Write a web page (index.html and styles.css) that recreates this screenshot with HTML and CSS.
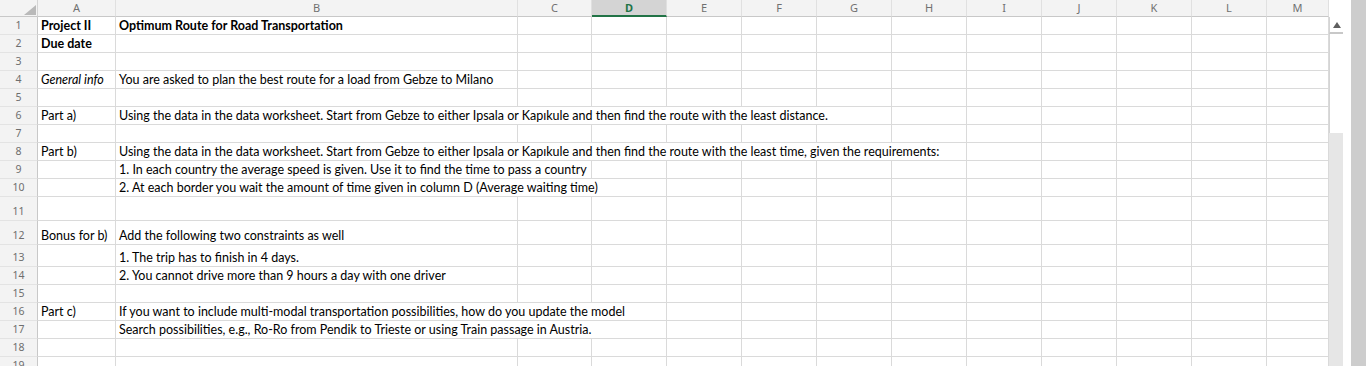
FILE: index.html
```html
<!DOCTYPE html>
<html lang="en">
<head>
  <meta charset="UTF-8">
  <meta name="viewport" content="width=device-width, initial-scale=1.0">
  <title>Project II - Optimum Route for Road Transportation</title>
  <link rel="stylesheet" href="styles.css">
</head>
<body>
  <div class="workbook">
    <div class="sheet" id="sheet">
      <div class="row head-row">
        <div class="corner"></div>
        <div class="col-head">A</div>
        <div class="col-head">B</div>
        <div class="col-head">C</div>
        <div class="col-head selected">D</div>
        <div class="col-head">E</div>
        <div class="col-head">F</div>
        <div class="col-head">G</div>
        <div class="col-head">H</div>
        <div class="col-head">I</div>
        <div class="col-head">J</div>
        <div class="col-head">K</div>
        <div class="col-head">L</div>
        <div class="col-head">M</div>
      </div>
    </div>

    <div class="vscroll">
      <div class="vscroll-top"></div>
      <div class="vscroll-up"></div>
      <div class="vscroll-thumb"></div>
      <div class="vscroll-track"></div>
    </div>
    <div class="spacer"></div>
    <div class="page-scroll"></div>
  </div>

  <script src="script.js"></script>
</body>
</html>
```

FILE: styles.css
```css
html, body {
  height: 100%;
  margin: 0;
  padding: 0;
  overflow: hidden;
  background: #fff;
}

.workbook {
  display: flex;
  height: 100%;
}

.sheet {
  width: 1329px;
  flex: none;
  font-family: 'Lato', sans-serif;
  font-size: 12.5px;
  color: #000;
}

.row {
  display: grid;
  grid-template-columns: 38px 78px 402px 74px repeat(9, 75px) 62px;
  height: 18px;
}

.row-tall {
  height: 24px;
}

.row-mid {
  height: 22px;
}

.head-row {
  height: 17px;
  background: #f3f3f3;
}

.corner {
  position: relative;
  border-right: 1px solid #d4d4d4;
  border-bottom: 1px solid #c8c8c8;
}

.corner::after {
  content: '';
  position: absolute;
  right: 1px;
  bottom: 1px;
  border-style: solid;
  border-width: 0 0 10px 12px;
  border-color: transparent transparent #b9b9b9 transparent;
}

.col-head {
  box-sizing: border-box;
  text-align: center;
  color: #707070;
  font-family: 'Noto Sans', sans-serif;
  font-size: 11px;
  line-height: 16px;
  border-right: 1px solid #e0e0e0;
  border-bottom: 1px solid #c8c8c8;
}

.col-head.selected {
  background: #d4d4d4;
  color: #217346;
  font-weight: bold;
  border-bottom: 2px solid #217346;
  line-height: 15px;
}

.row-head {
  box-sizing: border-box;
  display: flex;
  align-items: flex-end;
  justify-content: center;
  padding-bottom: 2px;
  background: #f3f3f3;
  color: #6e6e6e;
  font-family: 'Noto Sans', sans-serif;
  font-size: 10.5px;
  border-right: 1px solid #c8c8c8;
  border-bottom: 1px solid #e3e3e3;
}

.cell {
  box-sizing: border-box;
  display: flex;
  align-items: flex-end;
  padding: 0 3px 1px;
  white-space: nowrap;
  overflow: hidden;
  border-right: 1px solid #dadada;
  border-bottom: 1px solid #dadada;
}

.cell.bold {
  font-weight: bold;
}

.cell.italic {
  font-style: italic;
}

.span-2 { grid-column: span 2; }
.span-3 { grid-column: span 3; }
.span-6 { grid-column: span 6; }
.span-7 { grid-column: span 7; }

/* sheet scrollbar */
.vscroll {
  width: 14px;
  flex: none;
  display: flex;
  flex-direction: column;
}

.vscroll-top {
  height: 17px;
}

.vscroll-up {
  height: 15px;
  display: flex;
  justify-content: center;
  align-items: center;
  border-left: 1px solid #d4d4d4;
  border-bottom: 2px solid #c8c8c8;
}

.vscroll-up::before {
  content: '';
  border-style: solid;
  border-width: 0 4px 6px 4px;
  border-color: transparent transparent #5f5f5f transparent;
}

.vscroll-thumb {
  height: 99px;
  border-left: 1px solid #d4d4d4;
}

.vscroll-track {
  flex: 1;
  background: #e6e6e6;
}

.spacer {
  width: 8px;
  flex: none;
}

.page-scroll {
  width: 15px;
  flex: none;
  background: #cdcdcd;
}
```

FILE: script.js
```js
// sheet content, one entry per row
const rows = [
  { a: 'Project II', b: 'Optimum Route for Road Transportation', style: 'bold' },
  { a: 'Due date', style: 'bold' },
  {},
  { a: 'General info', aStyle: 'italic', b: 'You are asked to plan the best route for a load from Gebze to Milano' },
  {},
  { a: 'Part a)', b: 'Using the data in the data worksheet. Start from Gebze to either Ipsala or Kapıkule and then find the route with the least distance.', span: 6 },
  {},
  { a: 'Part b)', b: 'Using the data in the data worksheet. Start from Gebze to either Ipsala or Kapıkule and then find the route with the least time, given the requirements:', span: 7 },
  { b: '1. In each country the average speed is given. Use it to find the time to pass a country', span: 2 },
  { b: '2. At each border you wait the amount of time given in column D (Average waiting time)', span: 3 },
  { size: 'tall' },
  { a: 'Bonus for b)', b: 'Add the following two constraints as well', size: 'tall' },
  { b: '1. The trip has to finish in 4 days.', size: 'mid' },
  { b: '2. You cannot drive more than 9 hours a day with one driver' },
  {},
  { a: 'Part c)', b: 'If you want to include multi-modal transportation possibilities, how do you update the model', span: 3 },
  { b: 'Search possibilities, e.g., Ro-Ro from Pendik to Trieste or using Train passage in Austria.', span: 3 },
  {},
  {}
];

const sheet = document.getElementById('sheet');

function cell(text, extra) {
  const el = document.createElement('div');
  el.className = 'cell' + (extra ? ' ' + extra : '');
  if (text) el.textContent = text;
  return el;
}

rows.forEach((r, i) => {
  const row = document.createElement('div');
  row.className = 'row' + (r.size ? ' row-' + r.size : '');

  const num = document.createElement('div');
  num.className = 'row-head';
  num.textContent = i + 1;
  row.appendChild(num);

  row.appendChild(cell(r.a, r.aStyle || r.style));

  const span = r.span || 1;
  const bClass = [r.style, span > 1 ? 'span-' + span : ''].filter(Boolean).join(' ');
  row.appendChild(cell(r.b, bClass));

  // columns C..M that are not covered by the overflowing text
  for (let c = 0; c < 12 - span; c++) {
    row.appendChild(cell());
  }

  sheet.appendChild(row);
});
```
